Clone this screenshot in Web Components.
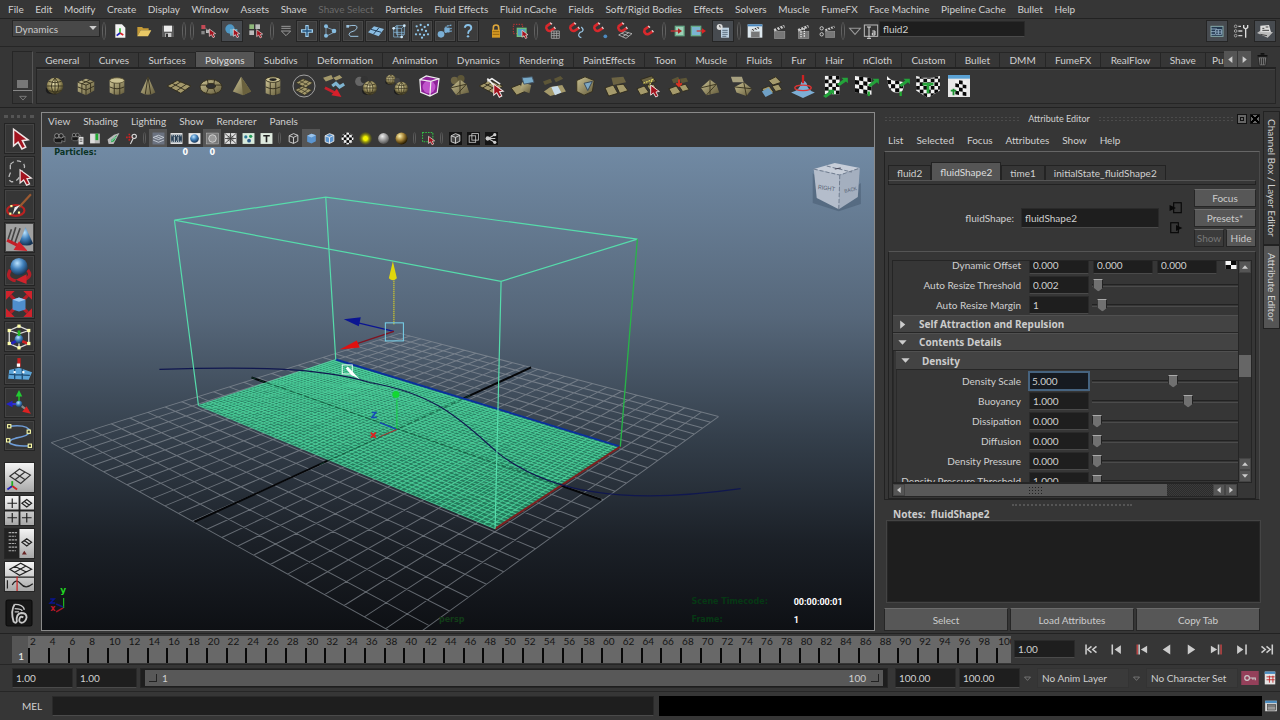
<!DOCTYPE html>
<html lang="en">
<head>
<meta charset="utf-8">
<title>Maya - fluid2</title>
<style>
html,body{margin:0;background:#363636}
body{font:10px/14px Lato,"Liberation Sans",sans-serif;color:#d0d0d0}
</style>
</head>
<body>
<maya-app></maya-app>
<script>
const base = `
*{box-sizing:border-box}
:host{display:block}
button,input,select,textarea{font:inherit;color:inherit;margin:0;border-radius:0}
button{background:none;border:0;padding:0;white-space:nowrap}
input:focus,textarea:focus{outline:0}
.field{background:#1e1e1e;border:1px solid #2a2a2a;border-bottom-color:#4a4a4a;padding:0 3px;min-width:0;color:#d0d0d0}
`;
function define(name, css, html, ready){
  const t = document.createElement('template');
  customElements.define(name, class extends HTMLElement{
    connectedCallback(){
      if(this.shadowRoot) return;
      const r = this.attachShadow({mode:'open'});
      t.innerHTML = `<style>${base}${css}</style>${typeof html==='function'?html(this):html}`;
      r.append(t.content.cloneNode(true));
      if(ready) ready(r,this);
    }
  });
}

/* ---------- icons, all on a 24 unit square ---------- */
const D = `<defs>
<linearGradient id="t" x1="0" y1="0" x2="1" y2="1"><stop offset="0" stop-color="#cbc293"/><stop offset="1" stop-color="#625a3a"/></linearGradient>
<radialGradient id="ts" cx=".45" cy=".35" r=".65"><stop offset="0" stop-color="#efe7b8"/><stop offset=".6" stop-color="#948958"/><stop offset="1" stop-color="#3b351e"/></radialGradient>
<radialGradient id="bs" cx=".4" cy=".3" r=".7"><stop offset="0" stop-color="#b9e2ff"/><stop offset=".5" stop-color="#4180bb"/><stop offset="1" stop-color="#173454"/></radialGradient>
<radialGradient id="gs" cx=".4" cy=".3" r=".7"><stop offset="0" stop-color="#eee"/><stop offset="1" stop-color="#555"/></radialGradient>
<radialGradient id="os" cx=".35" cy=".3" r=".7"><stop offset="0" stop-color="#fff3b0"/><stop offset=".5" stop-color="#a7863a"/><stop offset="1" stop-color="#2b1d00"/></radialGradient>
<radialGradient id="ys"><stop offset=".3" stop-color="#f2f200"/><stop offset="1" stop-color="#6b6b00" stop-opacity=".2"/></radialGradient>
<linearGradient id="w" x1="0" y1="0" x2="0" y2="1"><stop offset="0" stop-color="#f4f4f4"/><stop offset="1" stop-color="#a8a8a8"/></linearGradient>
</defs>`;
const S = (d,c='#ddd',w=1.5,x='') => `<path d="${d}" fill="none" stroke="${c}" stroke-width="${w}" ${x}/>`;
const F = (d,c,x='') => `<path d="${d}" fill="${c}" ${x}/>`;
const R = (x,y,w,h,c,e='') => `<rect x="${x}" y="${y}" width="${w}" height="${h}" fill="${c}" ${e}/>`;
const C = (x,y,r,c,e='') => `<circle cx="${x}" cy="${y}" r="${r}" fill="${c}" ${e}/>`;
const G = (s,t) => `<g transform="${t}">${s}</g>`;
const cur = (x,y,s=1) => G(F('M0 0L0 11L3 8.5L5.5 13L8 11.8L5.8 7.5L9.5 7Z','#a3141f','stroke="#f0e6e6" stroke-width="1"'),`translate(${x} ${y}) scale(${s})`);
const tile = 'M-1 12L10 6L25 12L14 20Z';
const plane = () => F(tile,'#a3986a')+S('M4.500 9L18.500 16.500M2.700 14.300L14 7.500M9 17.500L20 10','#2e2a1b',1)+S(tile,'#2e2a1b',1);
const ball = F('M2 14Q1 21 9 21L14 21Z','#1c1c1c')+C(12,12,9,'url(#ts)')+S('M12 3V21M3 12H21M5 7Q12 10 19 7M5 17Q12 20 19 17M12 3Q4 12 12 21Q20 12 12 3','#3a341f',1);
const cube = F('M3 8L12 4L21 7L21 17L12 22L3 18Z','url(#t)')+S('M3 8L12 11L21 7M12 11V22M7.500 6L17 9V19M16 5.500L7.500 9.500V20M3 13L12 16.500L21 12','#332e1c',1);
const boxw = (f='none',c='#ddd') => F('M4 7L12 3L20 6V17L12 21L4 18Z',f)+S('M4 7L12 10L20 6M12 10V21M4 7L12 3L20 6V17L12 21L4 18Z',c,1.6);
const chk = (x,y,n,m,s) => {let o=R(x,y,n*s,m*s,'#f2f2f2');for(let i=0;i<n;i++)for(let j=0;j<m;j++)if((i+j)%2)o+=R(x+i*s,y+j*s,s,s,'#080808');return o};
const grn = (x,y) => G(F('M0 7L7 2L5 0L12 0L12 6L10 4L3 9Z','#23a33a'),`translate(${x} ${y})`);
const mag = (x,y) => G(S('M9 1L3.500 5A4.200 4.200 0 0 0 8.500 11L14 7.500','#d8282c',3.4)+S('M8 .500L10.500 2.500M13 6L15 8.500','#e8d8d8',1.6),`translate(${x} ${y}) scale(1.15)`);
const clap = (x,y,s=1) => G(F('M0 5L13 0L14 3L1 8Z','#ccc')+S('M3 4L5 6.500M7 2.500L9 5M11 1L12.500 3.500','#222',1.5)+R(1,8,13,9,'#777','stroke="#aaa" stroke-width=".6"'),`translate(${x} ${y}) scale(${s})`);
const cam = F('M2 11H16L22 8V18L16 16V20H5L2 17Z','#181818','stroke="#aaa" stroke-width="1"')+C(7,7,4,'#222','stroke="#ccc"')+C(15,7,4,'#222','stroke="#ccc"');
const quads = (x='') => F('M1 15L9 12L14 19L5 22Z M12 12L19 10L23 16L16 18Z','#a59a6b','stroke="#2e2a1b"')+x;
const chunk = F('M2 14L12 5L19 10L22 19L8 22Z','url(#t)')+S('M2 14L19 10M12 5L12 21M8 22L19 10','#37311d',1);
const I = {
 new:F('M5 2H15L20 7V22H5Z','#f3f3f3')+S('M12 15V8','#0a0',2)+S('M12 15L17 18','#d22',2.500)+S('M12 15L7 19','#22b',2.500),
 open:F('M2 6H9L11 8H19V11H7L2 20Z','#c59a36')+F('M7 11H23L18 20H2Z','#e8c866'),
 save:F('M3 4H21V21H3Z','#5b5b5b')+R(6,4,12,9,'#eee')+R(8,15,9,6,'#ccc')+R(9,16,3,5,'#333'),
 selh:R(2,3,6,6,'#c44a55')+R(2,12,5,5,'#888')+R(9,10,5,5,'#bbb')+S('M8 7L14 16','#999',1)+cur(14,9,1),
 selo:C(9,9,7,'#4f97c4')+R(9,9,11,10,'#6fb6cf','opacity=".85"')+cur(14,9,1),
 selc:R(2,2,7,7,'#8fb77b')+R(11,2,7,7,'#bbb')+R(2,11,7,7,'#bbb')+S('M10 1V19M1 10H19','#333',1)+cur(13,10,.95),
 plus:S('M12 3V21M3 12H21','#9fd0f0',5)+S('M12 5V19M5 12H19','#214f79',2),
 joint:S('M6 20L6 6L18 11M6 20L18 14','#8bb0cc',1.2)+C(6,5,3,'#86bce0')+C(6,19,3,'#86bce0')+C(18,12,3.500,'#86bce0'),
 curve:S('M3 5Q20 1 18 8Q16 12 8 14Q4 17 8 20H20','#9cc3e0',1.500)+R(2,3,4,4,'#9cc3e0'),
 surf:F('M0 14L9 5L24 9L16 20Z','#8bbde2')+S('M4.500 9.500L20 14M8 17L16.500 7','#223f5a',1.500),
 latt:S('M4 8H16V21H4ZM8 4H20V17H8ZM4 8L8 4M16 8L20 4M16 21L20 17M10 4V21M4 14H20','#8cc3e8',1)+C(4,8,2,'#cfe9fa')+C(16,21,2,'#cfe9fa')+C(20,4,2,'#cfe9fa'),
 parts:[[4,5],[10,3],[16,6],[21,3],[6,11],[12,10],[18,12],[3,17],[9,17],[15,18],[21,17],[12,22]].map(p=>C(p[0],p[1],1.700,'#8fc6ea')).join(''),
 dyn:C(6,17,5,'#79aed4')+S('M13 8L14 5L22 3M12 14L22 12M12 10L22 8','#79aed4',2,'stroke-dasharray="3 1"')+R(11,7,8,7,'#79aed4'),
 help:S('M7 7Q8 3 12 3Q17 3 17 7.500Q17 10 13 12.500L12 16','#8ac2e8',2.800)+C(12,20,1.800,'#8ac2e8'),
 lock:S('M8 11V7Q8 3 12 3Q16 3 16 7V11','#e0a83a',2.400)+R(6,10,12,12,'#d59a25')+S('M7 13H17M7 17H17','#8a5c08',1.200),
 hilite:R(2,2,14,14,'none','stroke="#c33" stroke-width="1.500" stroke-dasharray="2 2"')+R(8,8,13,12,'#4f9fc0','stroke="#6dc080" stroke-width="2"')+cur(15,11,.95),
 mgrid:mag(0,-1)+S('M11 12H23V23H11ZM15 12V23M19 12V23M11 15.500H23M11 19H23','#aaa',1.200),
 mcurve:mag(0,-1)+S('M20 6Q26 12 18 14Q13 20 20 22','#9cc9e8',1.800),
 mpt:mag(0,-1)+C(20,20,2.800,'#4d8ac0'),
 mplane:mag(0,-1)+S('M4 18L13 13L24 16L15 23ZM8.500 15.500L19 19.500M10 20.500L19 14.500','#ccc',1.100),
 mlive:mag(3,4),
 inp:R(8,5,13,14,'#9fd0b8','stroke="#6a8" stroke-width="2"')+S('M1 12H14','#c33',2)+F('M12 8L18 12L12 16Z','#a22'),
 outp:R(2,5,14,14,'#7bb4d0','stroke="#6a8" stroke-width="2"')+S('M10 12H20','#c33',2)+F('M18 8L24 12L18 16Z','#d22'),
 hist:R(9,7,12,15,'#bcd0e0')+S('M11 11H19M11 14H19M11 17H19M11 20H17','#456',1.200)+C(7,6,4.500,'#ddd')+S('M7 3V6H9','#333',1),
 rend:R(1,2,22,20,'#dde8ee')+R(1,2,22,3,'#4a87bd')+G(clap(0,0,1),'translate(5 5)'),
 clap:clap(4,3,1.2), ipr:clap(4,3,1.2)+S('M9 9V22M14 8V22','#e8e8e8',2,'stroke-dasharray="2 1.500"'),
 rset:clap(9,4,1.05)+C(4,8,2.500,'none','stroke="#ccc" stroke-width="1.500"')+C(4,17,2.500,'none','stroke="#ccc" stroke-width="1.500"'),
 rename:R(2,3,20,17,'none','stroke="#bbb" stroke-width="1.500"')+S('M9 6V22M6 6H12M6 23H12','#ddd',1.500)+S('M14 12H18V18H14V15H18','#ddd',1.500),
 attr:R(3,5,18,15,'#23384f','stroke="#8aa" stroke-width="1.500"')+S('M3 9H12M3 13H9M3 17H9M10 10H19V17H10ZM14 10V17M10 13.500H19','#9bb6cc',1.300),
 tools:C(4,5,2,'none','stroke="#ccc"')+C(4,12,2,'none','stroke="#ccc"')+C(4,19,2,'none','stroke="#ccc"')+S('M8 5H12M8 12H14M8 19H14','#ccc',2)+S('M19 9V22M16 3V7L19 9L22 7V3','#ddd',2),
 chan:F('M0 15L7 10L24 14L16 22Z','#bbb')+F('M5 13V4L18 3L21 14Z','#ddd')+S('M8 8H11M13 6H17M8 11H18M5 17L15 19','#444',1.500),
 ball, cube, plane:plane(),
 cyl:F('M4 6V19Q12 24 20 19V6Z','url(#t)')+`<ellipse cx="12" cy="6" rx="8" ry="3" fill="#cbc293" stroke="#5b5335"/>`+S('M9 9V21.500M15 9V21.500M4 13Q12 17 20 13','#332e1c',1),
 cone:F('M12 2L20 19Q12 24 4 19Z','url(#t)')+S('M12 2L9 21M12 2L15 21','#332e1c',1),
 torus:`<ellipse cx="12" cy="13" rx="12" ry="8" fill="url(#t)" stroke="#332e1c"/><ellipse cx="12" cy="12" rx="5" ry="2.800" fill="#2f2f2f" stroke="#332e1c"/>`+S('M1 11L7 11M23 11L17 11M7 20L9 15M17 20L15 15M8 5L9 10M16 5L15 10','#332e1c',1),
 pyr:F('M11 2L22 18L13 22L2 18Z','url(#t)')+F('M11 2L22 18L13 22Z','#6a613d'),
 pipe:F('M4 5V20Q12 24 20 20V5Z','url(#t)')+`<ellipse cx="12" cy="5" rx="8" ry="3" fill="#cbc293" stroke="#332e1c"/><ellipse cx="12" cy="5" rx="4" ry="1.500" fill="#222"/>`+S('M9 8V22M15 8V22M4 13Q12 17 20 13','#332e1c',1),
 circ:C(12,12,12,'none','stroke="#aaa"')+G(plane(),'translate(4 0) scale(.7)')+G(plane(),'translate(3 8) scale(.7)'),
 sep:F('M-1 3L8 0L10 4L2 7ZM10 3L17 0L20 3L13 6Z','#a3986a')+S('M9 12L13 9L17 13L22 10','#7fb4d0',3.500)+S('M1 14L13 20','#c8202b',3)+F('M14 15L19 24L8 22Z','#d8202b'),
 comb:C(4,7,5,'#666')+C(9,5,4,'#333')+G(ball,'translate(5 4) scale(.85)'),
 comb2:G(ball,'translate(-3 -2) scale(.6)')+C(11,6,3,'#444')+G(ball,'translate(6 5) scale(.8)'),
 purp:F('M2 5L9 1L23 4L21 19L13 23L3 19Z','#8c2297')+C(12,13,7,'#c053cb')+S('M2 5L14 7L23 4M14 7L13 23M2 5L9 1L23 4L21 19L13 23L3 19Z','#eee',1.300),
 chunk:C(6,6,4,'#6d6443')+C(13,4,4,'#5d5637')+chunk,
 ext:plane()+S('M8 4L22 18M22 10L13 4L8 7','#f0f0f0',1.800)+cur(15,10,1.1),
 extr:F('M-1 14L9 10L14 18L5 22Z','#a59a6b','stroke="#2e2a1b"')+F('M11 8L21 11L19 20L9 16Z','url(#t)')+F('M11 3L22 2L24 8L13 10Z','#79abc9','stroke="#456"'),
 bridge:F('M0 7L8 4L10 8L2 11ZM12 4L19 1L22 4L14 8Z','#5d5637')+F('M1 18L8 13L21 11L25 18L8 23Z','#a59a6b')+F('M9 13L16 12L20 19L13 22Z','#c8dbe8'),
 bev:F('M3 6L12 2L22 6L20 18L11 22L3 18Z','url(#t)','stroke="#332e1c"')+F('M11 9L20 7L15 17Z','#7fa9c4','stroke="#345"'),
 merge:F('M0 14L9 11L14 20L4 23ZM12 11L20 10L25 17L16 20Z','#a59a6b','stroke="#2e2a1b"')+F('M7 3L20 2L23 8L9 11Z','#6d6443'),
 targ:quads(F('M5 5L17 1L22 7L10 11Z','#6c6443','stroke="#2e2a1b"')+S('M8 9L18 5L14 12','#e6dd60',1.300,'stroke-dasharray="2 1"')+cur(16,11,1)),
 coll:quads(F('M4 5L11 2L14 7L6 9ZM13 4L20 3L22 7L15 9Z','#5d5637')+S('M12 5V12M9 9L12 12L15 9','#d32',2)),
 split:chunk, loop:F('M1 2H13L15 8H3Z','#a8a180')+F('M5 13L15 8L24 15L18 23L7 19Z','url(#t)')+S('M5 13L24 15M15 8L18 23','#332e1c',1),
 app:quads(F('M8 6L16 2L22 8L13 11Z','#a59a6b','stroke="#2e2a1b"'))+F('M1 18L8 14L13 20L5 24Z','#6fa0c6'),
 sculpt:F('M-1 19Q9 17 10 8Q13 4 16 9Q17 17 25 19L12 25Z','#7daed4')+`<ellipse cx="12" cy="14" rx="9" ry="3" fill="none" stroke="#d33" stroke-width="1.500"/>`+S('M12 0V9','#c22',2.500),
 uv1:chk(1,1,4,5,4)+grn(14,3)+grn(-1,16), uv2:G(chk(0,1,4,4,4.500),'skewY(8)')+grn(14,4)+S('M15 23V18','#2a3',2.500),
 uv3:`<clipPath id="k"><path d="M1 1Q6 7 10 6L20 8Q20 20 12 20Q1 18 1 1Z"/></clipPath><g clip-path="url(#k)">${chk(1,1,5,5,4.500)}</g>`+grn(14,4)+S('M16 23V18','#2a3',2.500),
 uv4:`<clipPath id="k"><path d="M-1 1L7 3L17 3L25 1L25 17L12 25L-1 17Z"/></clipPath><g clip-path="url(#k)">${chk(-1,0,7,7,4)}</g>`+S('M12 20V10M6 10H18','#26a53a',3),
 uv5:R(0,0,24,24,'#e8e8e8')+R(0,0,24,4,'#5aa1d4')+G(chk(8,4,3,4,4),'skewY(8)')+S('M6 22V15M3 17H9','#1b9130',2),
 arrow:cur(7,3,1.4),
 lasso:`<path d="M4 5Q10 -1 16 4Q19 8 14 12Q12 21 5 21Q1 19 4 13Z" fill="none" stroke="#bbb" stroke-width="1.200" stroke-dasharray="4 3"/>`+cur(13,10,1.1),
 paint:`<ellipse cx="9" cy="17" rx="8" ry="5" fill="none" stroke="#b22" stroke-width="2"/>`+S('M23 2L12 14','#9c5a31',2)+F('M13 12L6 21L8 14Z','#eee')+R(4,12,2,2,'#ff9')+R(11,18,2,2,'#ff9')+R(3,19,2,2,'#ff9'),
 move:S('M9 2L5 15M13 3L8 17M5 4L2 13','#444',1.500)+F('M18 2L25 17Q20 21 12 17Z','url(#bs)')+S('M1 14L13 20','#c21f28',3)+F('M12 15L20 24L7 23Z','#d0232c'),
 rot:S('M4 11Q-1 19 9 21','#b51f28',3)+S('M20 11Q25 17 17 20','#b51f28',3)+C(12,8,8,'url(#bs)')+F('M9 20L19 15L19 24Z','#d0232c'),
 scale:S('M4 4L20 20M20 4L4 20','#b51f28',3)+F('M0 0H8L0 8ZM24 0V8L16 0ZM0 24V16L8 24ZM24 24H16L24 16Z','#d0232c')+F('M6 8L12 6L18 8V17L12 19L6 17Z','#4f8fce')+F('M6 8L12 6L18 8L12 10Z','#9fcbf2'),
 manip:S('M3 6L12 2L21 6V18L12 22L3 18ZM3 6L12 9L21 6M12 9V22','#ddd',1.200)+C(12,14,4,'url(#bs)')+S('M12 11V6','#2b2',2.500)+S('M9 16L5 18','#22b',2.500)+S('M15 16L20 18','#c22',2.500)+[[3,6],[12,2],[21,6],[3,18],[12,22],[21,18]].map(p=>R(p[0]-1.500,p[1]-1.500,3,3,'#ffa')).join(''),
 soft:F('M3 12L12 10L24 14L21 21L2 20Z','#5ba4d8')+S('M8 11V21M15 11V21M3 16L22 17','#1d4a70',1.200)+S('M12 1V9','#c22',3)+R(10,6,3,3,'#fff')+R(7,13,2,2,'#fff')+R(15,13,2,2,'#fff'),
 show:S('M12 13V5','#2b2',1.500)+S('M12 13L5 13','#33c',2)+S('M12 13L20 19','#888',2)+F('M9 6L12 0L15 6Z','#2c3')+C(12,13,3,'url(#bs)')+F('M0 13L6 10V16Z','#22c')+F('M23 22L15 20L19 15Z','#d22'),
 cvc:S('M3 3Q21 1 22 8Q21 12 9 14Q1 16 4 19Q10 22 22 21','#6f9dd8',1.500)+[[3,3],[21,8],[2,16],[22,21]].map(p=>R(p[0]-1.500,p[1]-1.500,3,3,'#332','stroke="#ffa"')).join(''),
 l1:R(0,0,24,24,'url(#w)')+S('M4 11L12 5L21 10L13 17ZM8 8L17 14M8 14L16.500 7.500','#333',1)+S('M6 19L2 22','#22b',1.500)+S('M6 19L10 22','#c22',1.500)+S('M6 19V15','#2a2',1.500),
 l2:R(0,0,24,24,'url(#w)')+S('M12 0V24M0 12H24','#222',1.500)+S('M6 2V10M2 6H10M6 14V22M2 18H10M18 14V22M14 18H22M14 6L18 3L22 6L18 9ZM16 4.500L20 7.500','#222',1),
 l3:R(0,0,12,24,'#222')+R(12,0,12,24,'url(#w)')+S('M3 3H10M3 6H9M3 9H10M3 12H9M3 15H10M3 18H9','#aaa',1,'stroke-dasharray="2 .500"')+S('M14 11L18 8L22 11L18 14ZM16 9.500L20 12.500','#222',1)+F('M14 21L16 18L18 21Z','#622'),
 l4:R(0,0,24,24,'url(#w)')+S('M0 12.500H24M4 6L13 1L22 6L12 11ZM8 3.500L18 8.500M8 8.500L17 3.500M2 15V22M6 19Q9 13 13 18T23 18','#222',1)+S('M10 12V24','#c22',1),
 maya:R(0,0,24,24,'#171717','rx="2" stroke="#0c0c0c"')+S('M8 4Q4 10 7 20Q9 22 10 20Q9 13 14 12Q19 12 19 16Q18 21 14 21Q11 20 13 16Q14 15 16 16','#c8c8c8',1.700)+S('M8 4Q16 4 17 9M8 8Q14 8 15 10M8 11L12 11','#c8c8c8',1.300),
 camera:cam, cam2:G(cam,'scale(.8)')+R(14,9,9,14,'#ddd')+S('M16 13H21M16 17H21','#333',1.500),
 book:R(2,3,9,18,'#ddd')+R(11,3,9,18,'#bbb')+R(12,3,5,12,'#2a3'),
 img:F('M1 14L13 5L23 2L12 22L3 22Z','#b9b9b9')+F('M7 15L19 5L13 17L8 19Z','#2a4')+S('M8 17L16 9','#ddf',1.500),
 pan:S('M2 10H14M8 3V17','#c22',3,'stroke-dasharray="3 2"')+C(17,8,4,'none','stroke="#ddd" stroke-width="2"')+S('M15 12L10 22','#ddd',2),
 grid:R(1,1,22,22,'#6b7280')+S('M2 10L12 6L22 10L12 14ZM2 15L12 19L22 15M7 8L17 12','#d0d6de',1.500),
 film:R(1,2,22,20,'#eee')+R(2,5,20,14,'#2a4055')+S('M3 7H22M3 17H22','#eee',2,'stroke-dasharray="2 2"')+S('M8 9V16M15 9V16','#eee',1.500),
 gate:R(1,2,22,20,'#e8e8e8')+C(12,12,8,'url(#bs)'), safe:R(1,2,22,20,'#777','stroke="#bbb"')+C(12,12,7,'#999','stroke="#ddd" stroke-width="1.500"'),
 chart:R(1,2,22,20,'#ddd')+S('M2 3L22 21M22 3L2 21M12 2V22M2 12H22','#333',1.500)+C(12,12,5,'none','stroke="#333"'),
 fld:R(1,2,22,20,'#d8eadc')+C(7,9,3,'#2c7a9a')+C(16,8,3,'#295')+C(13,16,3.500,'#2c5a8a'),
 txt:R(1,2,22,20,'#dfeadf')+S('M6 7H18M12 7V19','#222',3),
 wire:boxw(), shade:F('M4 7L12 3L20 6V17L12 21L4 18Z','#5b95d0')+F('M4 7L12 3L20 6L12 10Z','#9cc4ea'), wshade:boxw('#5b95d0','#eee'),
 tex:`<clipPath id="k"><circle cx="12" cy="12" r="11"/></clipPath><g clip-path="url(#k)">${chk(0,0,5,5,5)}</g>`,
 light:C(12,12,12,'url(#ys)'), gball:C(12,12,10,'url(#gs)'), oball:C(12,12,11,'url(#os)'),
 iso:R(1,1,19,17,'none','stroke="#3b4" stroke-width="2" stroke-dasharray="3 2"')+cur(12,8,1.2),
 xray:R(0,0,24,24,'#141414')+boxw('#444'), xr2:R(0,0,24,24,'#141414')+R(4,7,12,12,'none','stroke="#ccc" stroke-width="1.500"')+R(9,3,12,12,'none','stroke="#ccc" stroke-width="1.500"'),
 share:R(0,0,24,24,'#141414')+S('M6 12L18 5M6 12L19 12M6 12L18 19','#ccc',2)+C(5,12,4,'#ccc')+C(18,5,3,'#ccc')+C(18,19,3,'#ccc'),
 trash:S('M4 6H20M9 3H15','#111',2.500)+F('M5 8H19L17 22H7Z','#777','stroke="#111"')+S('M9 10V20M12 10V20M15 10V20','#1a1a1a',1.200),
 con1:R(8,3,13,17,'none','stroke="#080808" stroke-width="2"')+F('M1 7L12 12L1 17Z','#080808'),
 con2:R(3,3,13,17,'none','stroke="#080808" stroke-width="2"')+F('M12 7L23 12L12 17Z','#080808'),
 chks:R(1,4,22,16,'#f4f4f4')+R(12,4,11,8,'#0a0a0a')+R(1,12,11,8,'#0a0a0a'),
 key:R(-3,0,30,24,'#94405a')+C(7,12,4,'none','stroke="#ccc" stroke-width="2"')+S('M11 12H21V16M17 12V15','#ccc',2),
 prefs:R(3,1,18,22,'#e4e4e4')+R(3,1,18,4,'#4a8cc0')+S('M6 10H20M6 15H20M11 8V20M17 8V20','#b22',1.500),
 script:R(2,3,20,18,'#ddd')+R(2,3,20,4,'#4a8cc0')+R(6,9,14,10,'#999','stroke="#333"')+S('M6 12H20','#333',1),
};
const tri = (d) => ({l:'M17 3L6 12L17 21Z',r:'M7 3L18 12L7 21Z',u:'M3 17L12 7L21 17Z',d:'M3 7L12 17L21 7Z'})[d];
for(const d of 'lrud') I['tri-'+d]=F(tri(d),'#ccc');
I['tri-o']=S('M4 8L12 17L20 8Z','#999',1.600);
I['menu-o']=S('M5 5H19M5 8H19','#999',1.500)+S('M5 12L12 19L19 12Z','#999',1.500);
const P='#ccc', bar=(x,c=P)=>R(x,4,2.500,16,c);
I.p1=bar(2)+S('M12 7L6 12L12 17M20 7L14 12L20 17',P,2.500);
I.p2=bar(4)+F('M19 5V19L9 12Z',P); I.p3=bar(4,'#b44')+bar(7)+F('M21 6V18L11 12Z',P);
I.p4=F('M18 4V20L6 12Z',P); I.p5=F('M6 4V20L18 12Z',P);
I.p6=F('M3 6V18L13 12Z',P)+bar(14)+bar(18,'#b44'); I.p7=F('M5 5V19L15 12Z',P)+bar(18);
I.p8=S('M4 7L10 12L4 17M12 7L18 12L12 17',P,2.500)+bar(20);
define('maya-icon',`:host{display:block;width:var(--icon,20px);height:var(--icon,20px);flex:none}svg{display:block;width:100%;height:100%;overflow:visible}`,
 e=>`<svg viewBox="0 0 24 24" aria-hidden="true">${D}${I[e.getAttribute('name')]||''}</svg>`);
const ib = (n,cls='') => `<button class="${cls}" aria-label="${n}"><maya-icon name="${n}"></maya-icon></button>`;
const list = (s,cls='') => s.split(' ').map(n=>n==='|'?'<i class="sep"></i>':n[0]==='*'?ib(n.slice(1),'on '+cls):ib(n,cls)).join('');

/* ---------- menus ---------- */
define('maya-menu',`:host{display:flex;align-items:center}nav{display:flex;flex:1;gap:var(--gap,13px);justify-content:var(--spread,flex-start)}button.dim{color:#6a6a6a}`,
 e=>`<nav>${e.getAttribute('items').split(',').map(t=>`<button${t==='Shave Select'?' class="dim" disabled':''}>${t}</button>`).join('')}</nav>`);

/* ---------- status line ---------- */
define('status-line',`
:host{display:flex;align-items:center;height:29px;padding:0 3px 4px 12px;border-top:1px solid #222;border-bottom:1px solid #262626;--icon:16px}
button{width:24px;height:22px;display:grid;place-items:center;flex:none}
.on{width:22px;margin:0 1px;background:#474b50;border:1px solid #252525}
.box{width:22px;margin-right:1px;border:1px solid #242424;background:#3c3c3c;box-shadow:inset 0 0 0 1px #484848}
.sep{width:4px;height:18px;border:1px solid #777;border-width:0 1px;border-radius:50%;margin:0 2px;flex:none;opacity:.7}
select{appearance:none;width:88px;height:17px;margin-bottom:4px;background:#484848;border:1px solid #262626;padding:0 2px;color:#ccc}
.set{position:relative;display:flex}.set maya-icon{position:absolute;right:2px;top:3px;--icon:10px}
input{flex:0 1 146px;height:16px;margin:0 auto 3px 0}
.gap{margin-left:4px}
.sm{width:20px}.xs{width:16px}`,
`<label class="set"><select aria-label="Menu set"><option>Dynamics</option></select><maya-icon name="tri-d"></maya-icon></label>
<i class="sep"></i>${list('new open save | | selh *selo selc |')}${ib('menu-o','sm')}
${list('plus joint curve surf latt parts dyn help','box')}
${ib('lock','gap')}${list('hilite | mgrid mcurve mpt mplane mlive |')}${list('inp outp','sm')}<i class="sep"></i>${list('*hist |')}${list('rend clap ipr rset')}
<i class="sep"></i>${ib('tri-o','xs')}${ib('rename','xs')}<input class="field" value="fluid2" aria-label="Name">
${ib('attr','on')}${ib('tools')}${ib('chan','on')}`.replace('<i class="sep"></i><button class="on " aria-label="hist">','<button class="on gap" aria-label="hist">'));

/* ---------- shelf ---------- */
define('maya-shelf',`
:host{display:flex;height:61px;padding:4px 4px 3px 12px;border-bottom:1px solid #222}
.side{width:21px;border:1px solid #262626;border-right-color:#555;display:flex;flex-direction:column;justify-content:flex-end;align-items:center;gap:2px;--icon:10px}
.side i{width:11px;height:8px;background:#777}.side hr{width:100%;margin:0;border:0;border-top:1px solid #888}
main{flex:1;min-width:0;display:flex;flex-direction:column;padding-left:3px}
.tabs{display:flex;height:16px;margin-right:3px}
.names{flex:1;min-width:0;display:flex;overflow:hidden;align-items:flex-end}
.names button{flex:1 0 auto;height:15px;border:1px solid #262626;border-width:1px 1px 0 0;padding:0 2px}
.names .on{background:#555;height:16px;color:#ddd}
.names .cut{flex:0 0 18px;overflow:hidden;text-align:left;padding-left:6px;border-right:0}
.tabs>button{width:13px;display:grid;place-items:center;background:#555;margin-right:1px;--icon:9px}
.tabs>.bin{width:20px;background:none;--icon:15px}
.tabs>.first{margin-left:4px}
.shelf{flex:1;border:1px solid #262626;border-top:2px solid #222;box-shadow:inset 0 1px #444;display:flex;align-items:center;--icon:22px}
.row{width:80%;flex:0 1 936px;display:flex;margin-left:2px}
.row button{flex:1;display:grid;place-items:center;height:30px}`,
`<div class="side"><i></i><hr><maya-icon name="tri-o"></maya-icon></div><main><div class="tabs"><div class="names" role="tablist">${
'General,Curves,Surfaces,Polygons,Subdivs,Deformation,Animation,Dynamics,Rendering,PaintEffects,Toon,Muscle,Fluids,Fur,Hair,nCloth,Custom,Bullet,DMM,FumeFX,RealFlow,Shave'.split(',').map(t=>`<button role="tab"${t==='Polygons'?' class="on" aria-selected="true"':''}>${t}</button>`).join('')
}<button role="tab" class="cut">Pu</button></div>${ib('tri-l')}${ib('tri-r')}${ib('trash','bin')}</div>
<div class="shelf"><div class="row">${list('ball cube cyl cone plane torus pyr pipe circ sep comb comb2 purp chunk ext extr bridge bev merge targ coll split loop app sculpt uv1 uv2 uv3 uv4 uv5')}</div></div></main>`);

/* ---------- tool box ---------- */
define('tool-box',`
:host{display:flex;flex-direction:column;align-items:center;width:41px;padding:7px 4px 0 1px;gap:2px;--icon:26px}
i{width:30px;border-top:3px dotted #555;margin-bottom:3px;flex:none}
button{width:31px;height:31px;flex:none;display:grid;place-items:center;border:1px solid #242424;box-shadow:inset 0 0 0 1px #444}
.on{background:#a0a0a0}
.lay{--icon:29px;border-color:#262626}.first{margin-top:9px}.mark{--icon:26px;margin-top:3px;border:0;box-shadow:none}`,
`<i></i>${list('arrow lasso paint *move rot scale manip soft show cvc')}${ib('l1','lay first')}${list('l2 l3 l4','lay')}${ib('maya','mark')}`);

/* ---------- 3D view ---------- */
function homography(a,b,c,d){ /* unit square corners a(0,0) b(1,0) c(1,1) d(0,1) */
  const sx=a[0]-b[0]+c[0]-d[0], sy=a[1]-b[1]+c[1]-d[1], x1=b[0]-c[0],x2=d[0]-c[0],y1=b[1]-c[1],y2=d[1]-c[1];
  const k=x1*y2-x2*y1, g=(sx*y2-x2*sy)/k, h=(x1*sy-sx*y1)/k;
  return (u,v)=>{const w=g*u+h*v+1;return [((b[0]-a[0]+g*b[0])*u+(d[0]-a[0]+h*d[0])*v+a[0])/w,((b[1]-a[1]+g*b[1])*u+(d[1]-a[1]+h*d[1])*v+a[1])/w].map(n=>n.toFixed(1))};
}
function mesh(q,n,m){const f=homography(...q);let s='';
  for(let i=0;i<=n;i++)s+=`M${f(i/n,0)}L${f(i/n,1)}`;
  for(let j=0;j<=m;j++)s+=`M${f(0,j/m)}L${f(1,j/m)}`;return s}
const floor=mesh([[52,443],[400,334],[718,417],[408,641]],24,24);
const fluid=mesh([[199,406],[336,360],[620,447],[495,529]],40,70);
define('scene-view',`
:host{display:flex;flex-direction:column;flex:1;min-width:0;border:1px solid #8a8a8a;margin-top:4px}
maya-menu{height:16px;padding-left:6px;background:#383838}
.bar{display:flex;height:18px;align-items:center;background:#383838;padding-left:8px;--icon:13px;flex:none}
.bar button{width:18px;height:18px;display:grid;place-items:center;flex:none}.bar .on{background:#555}
.sep{width:3px;height:12px;border:1px solid #777;border-width:0 1px;border-radius:50%;margin:0 3px;flex:none;opacity:.6}
.view{flex:1;min-height:0;background:linear-gradient(#718aa4 0%,#56677a 35%,#343f4b 60%,#1b2027 82%,#0e1014)}
svg{display:block;width:100%;height:100%}
text{font-family:"DejaVu Sans","Liberation Sans",sans-serif;font-weight:bold}`,
`<maya-menu items="View,Shading,Lighting,Show,Renderer,Panels"></maya-menu>
<div class="bar">${list('camera cam2 book img pan | *grid film gate *safe chart fld txt | wire *shade wshade tex light gball oball | iso | xray xr2 share')}</div>
<div class="view"><svg viewBox="42 148 832 482" preserveAspectRatio="xMidYMid slice">
<path d="${floor}" fill="none" stroke="#9298a0" stroke-width="1" opacity=".62"/>
<path d="M531 368L195 522M252 378L601 500" stroke="#050608" stroke-width="2" fill="none"/>
<path d="M199 406L336 360L620 447L495 529Z" fill="#249468" opacity=".75"/>
<path d="${fluid}" fill="none" stroke="#58efb1" stroke-width="1" opacity=".65"/>
<path d="M252 378L560 486M470 396L320 465" stroke="#134a38" stroke-dasharray="5 3" fill="none" opacity=".7"/>
<path d="M336 360L620 447" stroke="#0a2f9a" stroke-width="2"/><path d="M495 529L620 447" stroke="#7c2020" stroke-width="2"/>
<path d="M160 370C250 367 320 368 370 383C440 395 465 425 500 455C550 492 620 506 740 489" fill="none" stroke="#10174f" stroke-width="1.200"/>
<path d="M175 221L326 198L637 240L501 282ZM175 221L199 406M326 198L336 360M501 282L495 529" fill="none" stroke="#56dcab" stroke-width="1.200"/>
<path d="M637 240L620 447" stroke="#28b548" stroke-width="1.300"/>
<path d="M394 332L352 322" stroke="#0b1592" stroke-width="1.500"/><path d="M344 320L361 318L359 327Z" fill="#0b1592"/>
<path d="M394 332L352 346" stroke="#801320" stroke-width="1.500"/><path d="M340 350L357 341L360 348Z" fill="#e01010"/>
<path d="M394 325V280" stroke="#d6cd22" stroke-width="1.500" stroke-dasharray="1 1"/><path d="M393 262L397 279Q393 283 389 279Z" fill="#e0d60c"/>
<rect x="385.500" y="323.500" width="18" height="18" fill="none" stroke="#78d4ee"/>
<path d="M397 430V400" stroke="#10d040"/><circle cx="396" cy="395" r="3.500" fill="#12d832"/>
<path d="M397 430L380 423" stroke="#1648b8" stroke-width="1.500"/><path d="M397 430L380 437" stroke="#a33" stroke-width="1"/>
<path d="M372 413H376L372 418H377" stroke="#1648b8" fill="none" stroke-width="1.500"/><path d="M371 433L376 438M376 433L371 438" stroke="#d22" stroke-width="2"/>
<rect x="342.500" y="365.500" width="10" height="9" fill="none" stroke="#e8fff4"/><path d="M348 367L360 380L355 377L352 376L346 369Z" fill="#fff"/>
<g><path d="M812 174L836 202L860 184V205L838 212L812 204Z" fill="#44586d" opacity=".5"/><path d="M813 170L834 164L859 169L839 176Z" fill="#c7ced9"/><path d="M813 170L839 176L838 210L816 199Z" fill="#b4bdcb"/><path d="M839 176L859 169L857 198L838 210Z" fill="#a4afbf"/><path d="M813 170L839 176L859 169M839 176L838 210M826 167L851 173" stroke="#727e90" stroke-dasharray="4 2" fill="none"/><path d="M834 170L840 169" stroke="#445"/>
<text x="817" y="190" fill="#5d6879" transform="rotate(7 817 190)" style="font:6px Roboto">RIGHT</text><text x="844" y="194" fill="#5d6879" transform="rotate(-14 844 194)" style="font:5px Roboto">BACK</text></g>
<text x="55" y="156" font-size="8" fill="#0a3325">Particles:</text><text x="183" y="156" font-size="8" fill="#fff">0</text><text x="210" y="156" font-size="8" fill="#fff">0</text>
<text x="691" y="604" font-size="8" fill="#063814">Scene Timecode:</text><text x="793" y="605" fill="#fff" style="font:bold 9px Roboto">00:00:00:01</text>
<text x="691" y="622" font-size="8" fill="#063814">Frame:</text><text x="793" y="623" fill="#fff" style="font:bold 9px Roboto">1</text>
<text x="439" y="622" font-size="8" fill="#123c18">persp</text>
<text x="61" y="593" font-size="9" fill="#22d622">y</text><text x="51" y="611" font-size="8" fill="#c0182a">x</text><path d="M51 599H55L51 603H56" stroke="#0a1590" stroke-width="1.500" fill="none"/>
<path d="M64.500 608V598" stroke="#22d622"/><path d="M64 608L57 612" stroke="#a51828" stroke-width="1.500"/><path d="M64 607L57 604" stroke="#101a80" stroke-width="1.500"/>
</svg></div>`);

/* ---------- attribute rows ---------- */
define('attr-row',`
:host{display:flex;align-items:center;height:20px}
label{width:var(--label,128px);text-align:right;flex:none;white-space:nowrap}
.field{width:60px;height:18px;margin-left:8px;flex:none}
.field+.field{margin-left:4px}
.live{background:#161a20;outline:2px solid #46637f;outline-offset:-1px;border:0}
input[type=range]{appearance:none;flex:1;min-width:0;height:14px;margin-left:3px;background:linear-gradient(#222,#222) 0 6px/100% 1px no-repeat,linear-gradient(#4b4b4b,#4b4b4b) 0 8px/100% 1px no-repeat}
input[type=range]::-webkit-slider-thumb{appearance:none;width:10px;height:13px;background:#707070;border:1px solid #222;border-top-color:#aaa;clip-path:polygon(0 0,100% 0,100% 70%,50% 100%,0 70%)}
button{margin-left:8px;--icon:12px}`,
e=>{const n=e.getAttribute('name'),v=e.getAttribute('values').split(','),s=e.getAttribute('slider');
 return `<label for="f">${n}</label>${v.map((x,i)=>`<input class="field${e.hasAttribute('active')?' live':''}" ${i?`aria-label="${n} ${i+1}"`:'id="f"'} value="${x}">`).join('')}${s===null?ib('chks'):`<input type="range" min="0" max="100" value="${s}" aria-label="${n} slider">`}`});
define('attr-section',`
button{width:100%;height:18px;display:flex;align-items:center;background:#434343;border-top:1px solid #505050;border-bottom:1px solid #262626;font-family:"Noto Sans",sans-serif;font-weight:bold;gap:11px;padding-left:4px;--icon:11px;color:#ccc}
.body{padding:0 0 0 2px;border-left:1px solid #2a2a2a}
:host([inner]) button{height:19px}:host([inner]) .body{padding-top:1px}`,
e=>`<button aria-expanded="${e.hasAttribute('open')}"><maya-icon name="tri-${e.hasAttribute('open')?'d':'r'}"></maya-icon>${e.getAttribute('name')}</button>${e.hasAttribute('open')?'<div class="body"><slot></slot></div>':''}`);

/* ---------- attribute editor ---------- */
define('attribute-editor',`
:host{display:flex;flex-direction:column;flex:0 0 376px;margin:3px 3px 0 9px}
h2{font:inherit;font-size:9px;margin:0;height:15px;display:flex;align-items:center;gap:8px}
h2::before,h2 i{content:"";flex:1;height:6px;background:radial-gradient(#4b4b4b 1px,transparent 1px) 0 0/4px 3px}
h2 button{width:10px;height:10px;background:#666;border:1px solid #111;margin-left:-5px;position:relative}
h2 button::after{content:"";position:absolute;inset:2px;border:1px solid #111}
h2 .x::after{border:0;inset:0;background:linear-gradient(45deg,transparent 43%,#000 43% 57%,transparent 57%),linear-gradient(-45deg,transparent 43%,#000 43% 57%,transparent 57%)}
maya-menu{height:25px;padding:2px 0 0 4px}
.frame{border:1px solid #222;border-right-color:#4a4a4a;flex:1;min-height:0;display:flex;flex-direction:column;padding:10px 3px 0;border-top:1px solid #666}
.tabs{display:flex;align-items:flex-end;height:18px;flex:none}
.tabs button{height:15px;border:1px solid #232323;border-bottom:0;padding:0 8px}
.tabs .on{height:18px;background:#555;color:#ddd}
.line{height:5px;border:1px solid #222;border-top-color:#555;flex:none}
.node{display:flex;height:66px;align-items:center;flex:none}
.node label{width:125px;text-align:right;margin-left:1px}
.node .field{width:138px;height:20px;margin-left:7px}
.con{display:flex;flex-direction:column;gap:6px;margin-left:10px;--icon:14px}
.acts{width:62px;margin-left:auto;display:grid;grid-template-columns:1fr 1fr;gap:2px}
.btn{background:#575757;border:1px solid #262626;border-top-color:#6c6c6c;height:18px;color:#ccc}
.wide{grid-column:span 2}.btn:disabled{color:#777;background:#3b3b3b}
.list{flex:1;min-height:0;border:1px solid #222;border-top:1px solid #555;display:grid;grid-template:minmax(0,1fr) 14px/minmax(0,1fr) 14px;padding:8px 3px 1px}
.scroll{overflow:hidden;min-height:0;border:1px solid #252525;border-right:0}
.in{margin-top:-6px}
.v{display:flex;flex-direction:column;background:repeating-conic-gradient(#2c2c2c 0 25%,#3a3a3a 0 50%) 0/2px 2px;border:1px solid #252525}
.v i{background:#666;height:22px;margin:auto 0}
.v button,.h button{background:#555;width:12px;height:12px;display:grid;place-items:center;--icon:8px;border:1px solid #444;flex:none}
.h{display:flex;background:repeating-conic-gradient(#2c2c2c 0 25%,#3a3a3a 0 50%) 0/2px 2px;border:1px solid #252525}
.h i{background:#585858;width:262px;margin-right:auto;display:grid;place-items:center}
.h i::after{content:"";width:16px;height:9px;background:radial-gradient(#222 1px,transparent 1px) 0 0/3px 3px}
.grip{width:120px;height:3px;margin:4px auto 0;border-top:2px dotted #555;flex:none}
.notes{font-family:"Noto Sans",sans-serif;font-weight:bold;padding:0 9px;height:14px;color:#ccc;flex:none}
textarea{display:block;height:81px;flex:none;width:calc(100% - 3px);margin-left:3px;background:#1e1e1e;border:1px solid #272727;outline:1px solid #444;resize:none}
footer{display:grid;grid-template-columns:1fr 1fr 1fr;gap:2px;margin-top:6px;flex:none}footer .btn{height:23px}`,
`<h2>Attribute Editor<i></i><button aria-label="Float"></button><button class="x" aria-label="Close"></button></h2>
<maya-menu items="List,Selected,Focus,Attributes,Show,Help"></maya-menu>
<div class="frame"><div class="tabs" role="tablist"><button role="tab">fluid2</button><button role="tab" class="on" aria-selected="true">fluidShape2</button><button role="tab">time1</button><button role="tab">initialState_fluidShape2</button></div><div class="line"></div>
<div class="node"><label for="n">fluidShape:</label><input id="n" class="field" value="fluidShape2"><div class="con">${ib('con1')}${ib('con2')}</div>
<div class="acts"><button class="btn wide">Focus</button><button class="btn wide">Presets*</button><button class="btn" disabled>Show</button><button class="btn">Hide</button></div></div>
<div class="list"><div class="scroll"><div class="in">
<attr-row name="Dynamic Offset" values="0.000,0.000,0.000"></attr-row><attr-row name="Auto Resize Threshold" values="0.002" slider="1"></attr-row><attr-row name="Auto Resize Margin" values="1" slider="4"></attr-row>
<attr-section name="Self Attraction and Repulsion"></attr-section>
<attr-section name="Contents Details" open><attr-section inner name="Density" open style="--label:122px">
<attr-row name="Density Scale" values="5.000" slider="56" active></attr-row><attr-row name="Buoyancy" values="1.000" slider="67"></attr-row><attr-row name="Dissipation" values="0.000" slider="0"></attr-row><attr-row name="Diffusion" values="0.000" slider="0"></attr-row><attr-row name="Density Pressure" values="0.000" slider="0"></attr-row><attr-row name="Density Pressure Threshold" values="1.000" slider="0"></attr-row>
</attr-section></attr-section></div></div>
<div class="v">${ib('tri-u')}<i></i>${ib('tri-u')}${ib('tri-d')}</div>
<div class="h">${ib('tri-l')}<i></i>${ib('tri-l')}${ib('tri-r')}</div></div></div>
<div class="grip"></div><label class="notes" for="notes">Notes: &nbsp;fluidShape2</label><textarea id="notes"></textarea>
<footer><button class="btn">Select</button><button class="btn">Load Attributes</button><button class="btn">Copy Tab</button></footer>`);
define('side-tabs',`:host{width:17px;display:flex;flex-direction:column;margin-top:3px}
button{writing-mode:vertical-rl;width:17px;height:134px;border:1px solid #222;display:grid;place-items:center}
.on{background:#555;height:84px}`,`<button>Channel Box / Layer Editor</button><button class="on">Attribute Editor</button>`);

/* ---------- time controls ---------- */
define('time-slider',`:host{display:flex;height:32px;align-items:center;padding:0 1px 0 12px;border-top:1px solid #222;border-bottom:1px solid #262626}
.track{flex:1;min-width:0;height:27px;background:#686868;display:flex;overflow:hidden;color:#151515}
.now{width:16px;background:#555;flex:none;color:#eee;display:flex;align-items:flex-end;justify-content:flex-end;padding-right:4px}
.ticks{flex:1;display:grid;grid-template-columns:repeat(50,minmax(0,1fr));margin-right:-5px}
.ticks span{padding-left:2px;line-height:11px;background:linear-gradient(#080808,#080808) 0 100%/2px 15px no-repeat;white-space:nowrap}
input{width:61px;height:18px;margin:0 0 0 3px}
.play{display:flex;margin-left:4px;--icon:15px}.play button{width:25px;display:grid;place-items:center}`,
`<div class="track"><div class="now">1</div><div class="ticks">${Array.from({length:50},(_,i)=>`<span>${i*2+2}</span>`).join('')}</div></div><input class="field" value="1.00" aria-label="Current time"><div class="play">${list('p1 p2 p3 p4 p5 p6 p7 p8')}</div>`);
define('range-slider',`:host{display:flex;height:27px;align-items:center;padding:0 2px 0 12px;gap:3px;border-bottom:1px solid #262626;--icon:14px}
.field{width:61px;height:20px}
.range{flex:1;height:20px;background:#1e1e1e;border:1px solid #262626;padding:1px 4px;display:flex;margin-right:4px}
.range div{flex:1;background:#585858;display:flex;align-items:center;justify-content:space-between;padding:0 4px}
.range span{display:flex;align-items:center;gap:5px}.range i{width:8px;height:8px;border:1px solid #222;border-width:0 1px 1px 0}
.sel{display:flex;align-items:center;--icon:9px}
select{appearance:none;background:#3a3a3a;border:1px solid #333;height:20px;padding:0 4px;width:92px;margin-left:5px}
button{width:17px;display:grid;place-items:center}`,
`<input class="field" value="1.00" aria-label="Start"><input class="field" value="1.00" aria-label="Range start">
<div class="range"><div><span><i></i>1</span><span>100<i></i></span></div></div>
<input class="field" value="100.00" aria-label="Range end"><input class="field" value="100.00" aria-label="End">
<label class="sel"><maya-icon name="tri-o"></maya-icon><select aria-label="Anim layer"><option>No Anim Layer</option></select></label><label class="sel"><maya-icon name="tri-o"></maya-icon><select aria-label="Character set"><option>No Character Set</option></select></label>${ib('key')}${ib('prefs')}`);
define('command-line',`:host{display:flex;height:28px;align-items:center;padding:0 2px 0 12px;--icon:14px}
label{width:40px;padding-left:10px}.field{flex:0 1 602px;height:20px}output{flex:1;height:20px;background:#000;margin:0 2px 0 5px}`,
`<label for="c">MEL</label><input id="c" class="field"><output></output>${ib('script')}`);

define('maya-app',`:host{display:flex;flex-direction:column;height:100vh;background:#363636}
.top{height:18px;padding:0 16% 0 8px;--spread:space-between;--gap:0px}
.main{flex:1;min-height:0;display:flex;margin-bottom:2px}`,
`<maya-menu class="top" items="File,Edit,Modify,Create,Display,Window,Assets,Shave,Shave Select,Particles,Fluid Effects,Fluid nCache,Fields,Soft/Rigid Bodies,Effects,Solvers,Muscle,FumeFX,Face Machine,Pipeline Cache,Bullet,Help"></maya-menu>
<status-line></status-line><maya-shelf></maya-shelf>
<div class="main"><tool-box></tool-box><scene-view></scene-view><attribute-editor></attribute-editor><side-tabs></side-tabs></div>
<time-slider></time-slider><range-slider></range-slider><command-line></command-line>`);
</script>
</body>
</html>
